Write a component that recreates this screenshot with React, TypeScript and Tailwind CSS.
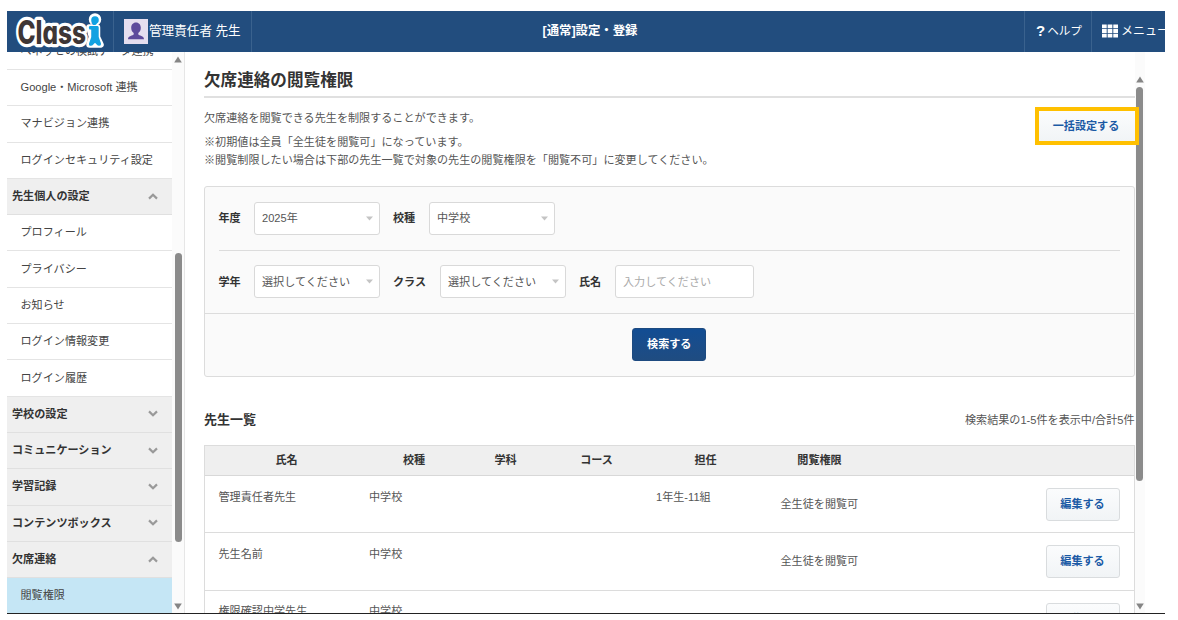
import type { ReactNode } from "react";

const navItems: { label: string; kind: "item" | "open" | "closed" | "active" }[] = [
  { label: "ベネッセの模試データ連携", kind: "item" },
  { label: "Google・Microsoft 連携", kind: "item" },
  { label: "マナビジョン連携", kind: "item" },
  { label: "ログインセキュリティ設定", kind: "item" },
  { label: "先生個人の設定", kind: "open" },
  { label: "プロフィール", kind: "item" },
  { label: "プライバシー", kind: "item" },
  { label: "お知らせ", kind: "item" },
  { label: "ログイン情報変更", kind: "item" },
  { label: "ログイン履歴", kind: "item" },
  { label: "学校の設定", kind: "closed" },
  { label: "コミュニケーション", kind: "closed" },
  { label: "学習記録", kind: "closed" },
  { label: "コンテンツボックス", kind: "closed" },
  { label: "欠席連絡", kind: "open" },
  { label: "閲覧権限", kind: "active" },
];

const teachers = [
  { name: "管理責任者先生", school: "中学校", homeroom: "1年生-11組", access: "全生徒を閲覧可" },
  { name: "先生名前", school: "中学校", homeroom: "", access: "全生徒を閲覧可" },
  { name: "権限確認中学先生", school: "中学校", homeroom: "", access: "全生徒を閲覧可" },
];

function Logo() {
  return (
    <svg
      width="100"
      height="41"
      viewBox="0 0 100 41"
      className="relative z-20 shrink-0 overflow-visible [font-feature-settings:'cv11']"
      aria-label="Classi"
    >
      <g fill="#fff" stroke="#fff" strokeWidth="6.5" strokeLinejoin="round" strokeLinecap="round">
        <path d="M16 14 28 11v21H16zM36 11v21M46 19h30v13H46z" strokeWidth="5" />
        <circle cx="88" cy="8.500" r="3" />
        <path d="M82.500 16.500H90V26l3.500 7.500H82.500L85 26z" />
      </g>
      <text
        x="10.500"
        y="33"
        fontFamily="Inter, sans-serif"
        fontWeight="800"
        fontSize="32"
        textLength="68.500"
        lengthAdjust="spacingAndGlyphs"
        fill="#3e3635"
        stroke="#fff"
        strokeWidth="6.500"
        strokeLinejoin="round"
        paintOrder="stroke"
      >
        Class
      </text>
      <g fill="#12a2e2">
        <text x="83" y="32" fontFamily="Inter, sans-serif" fontWeight="800" fontSize="29">
          i
        </text>
        <circle cx="88" cy="9" r="3.800" />
        <path d="M82.500 15h8q1.200 0 1.200 1.500V26l2.300 6.500q.4 2.300-1.800 2.300-1.500 0-2.500-1.300L88 31.800l-1.700 1.700q-1 1.300-2.500 1.300-2.200 0-1.800-2.300L84.300 26v-7.500h-1.800q-1.500-1.700 0-3.500z" />
      </g>
    </svg>
  );
}

function Chevron({ up }: { up: boolean }) {
  return (
    <svg width="10" height="7" viewBox="0 0 10 7" fill="none" stroke="#999" strokeWidth="2.2">
      <path d={up ? "M1 5.600 5 1.800 9 5.600" : "M1 1.400 5 5.200 9 1.400"} />
    </svg>
  );
}

function Arrow({ up }: { up: boolean }) {
  return (
    <svg width="8" height="7" viewBox="0 0 8 7" fill="#858585">
      <path d={up ? "M4 .5 7.800 6.500H.2z" : "M4 6.500 7.800 .5H.2z"} />
    </svg>
  );
}

function Nav() {
  return (
    <nav className="h-[561px] w-[165px] shrink-0 overflow-hidden">
      <div className="-mt-[18.3px]">
        {navItems.map((n) => {
          if (n.kind === "item" || n.kind === "active") {
            return (
              <div
                key={n.label}
                className={
                  "flex h-[36.3px] items-center border-b border-[#e4e4e4] pb-px pl-[13.5px] whitespace-nowrap text-[#444] " +
                  (n.kind === "active" ? "bg-[#c5e6f5]" : "bg-white")
                }
              >
                {n.label}
              </div>
            );
          }
          return (
            <div
              key={n.label}
              className="flex h-[36.3px] items-center justify-between border-b border-[#e0e0e0] bg-[#efefef] pr-[14px] pb-px pl-[5px] font-bold whitespace-nowrap text-[#333]"
            >
              {n.label}
              <Chevron up={n.kind === "open"} />
            </div>
          );
        })}
      </div>
    </nav>
  );
}

function Select({ value }: { value: string }) {
  return (
    <div className="flex h-[33px] w-[125.5px] items-center justify-between rounded-[3px] border border-[#d9d9d9] bg-white pr-[6px] pl-[7px] text-[#555]">
      <span>{value}</span>
      <svg width="7" height="5" viewBox="0 0 7 5" fill="#c4c4c4">
        <path d="M0 .5h7L3.500 4.500z" />
      </svg>
    </div>
  );
}

function Label({ className, children }: { className: string; children: ReactNode }) {
  return <span className={"shrink-0 font-bold text-[#333] " + className}>{children}</span>;
}

function EditButton() {
  return (
    <button className="h-[33px] w-[74px] rounded-[3px] border border-[#d9dcde] bg-linear-to-b from-[#fbfcfd] to-[#f1f4f6] pb-px font-bold text-[#1b5aa5]">
      編集する
    </button>
  );
}

const columns = "grid grid-cols-[150px_119px_65px_117px_101px_127px_1fr]";

export default function App() {
  return (
    <div className="h-[620px] w-[1178px] overflow-hidden bg-white pt-[11px] pl-[7px] font-['Liberation_Sans','Noto_Sans_CJK_JP',sans-serif] text-[11.1px] leading-[18px]">
      <div className="flex h-[603px] w-[1158px] flex-col overflow-hidden border-b border-[#222]">
        <header className="flex h-[41px] shrink-0 bg-[#224d7e] text-white">
          <div className="flex w-[107px] shrink-0 border-r border-[#3a628e]">
            <Logo />
          </div>
          <div className="flex w-[138px] shrink-0 items-center gap-[1px] border-r border-[#3a628e] pl-[10px] text-[12.6px] whitespace-nowrap">
            <svg width="24" height="25" viewBox="0 0 24 25" className="shrink-0">
              <path fill="#e5deef" d="M0 0h24v25H0z" />
              <path
                fill="#5e4a9c"
                d="M12 3.600c3 0 4.800 2.300 4.800 5.200 0 2.400-1 4.200-2.500 5.200v1.600c.6 1 5.700 1.200 5.700 4.600H4c0-3.400 5.100-3.600 5.700-4.600V14c-1.500-1-2.500-2.800-2.500-5.200 0-2.900 1.800-5.200 4.800-5.200z"
              />
            </svg>
            <span className="-mt-[2px]">管理責任者 先生</span>
          </div>
          <div className="flex flex-1 items-center justify-center pr-[96px] pb-[2px] text-[12.4px] font-bold">
            [通常]設定・登録
          </div>
          <div className="flex w-[67px] shrink-0 items-center gap-[2px] border-l border-[#3a628e] pb-[2px] pl-[11px] whitespace-nowrap">
            <b className="text-[15px]">?</b>
            <span className="text-[11.6px]">ヘルプ</span>
          </div>
          <div className="flex w-[74px] shrink-0 items-center gap-[3px] overflow-hidden border-l border-[#3a628e] pb-[2px] pl-[10px] text-[12px] whitespace-nowrap">
            <svg width="16" height="14" viewBox="0 0 17 14" fill="#fff" className="shrink-0">
              <path d="M0 0h5v4H0zM6 0h5v4H6zM12 0h5v4h-5zM0 5h5v4H0zM6 5h5v4H6zM12 5h5v4h-5zM0 10h5v4H0zM6 10h5v4H6zM12 10h5v4h-5z" />
            </svg>
            <span>メニュー</span>
          </div>
        </header>

        <div className="flex min-h-0 flex-1">
          <Nav />
          <div className="flex w-[13px] shrink-0 flex-col items-center border-r border-[#e6e6e6] bg-[#fbfbfb] pt-[4px] pb-[3px]">
            <Arrow up />
            <div className="mt-[190px] h-[289px] w-[7px] rounded-full bg-[#8b8b8b]" />
            <div className="mt-auto flex">
              <Arrow up={false} />
            </div>
          </div>

          <main className="ml-[19px] w-[930.5px] shrink-0 pt-[15px] text-[#555]">
            <h1 className="h-[31px] border-b-2 border-[#e0e0e0] text-[16.6px] leading-[27px] font-bold text-[#333]">
              欠席連絡の閲覧権限
            </h1>
            <div className="flex h-[88px] justify-between pt-[11px]">
              <div>
                <p>欠席連絡を閲覧できる先生を制限することができます。</p>
                <p className="mt-[6px]">※初期値は全員「全生徒を閲覧可」になっています。</p>
                <p>※閲覧制限したい場合は下部の先生一覧で対象の先生の閲覧権限を「閲覧不可」に変更してください。</p>
              </div>
              <div className="relative z-10 -mt-[2px] -mr-[4.5px] h-[38px] w-[104px] border-4 border-[#ffc000]">
                <button className="h-full w-full bg-linear-to-b from-[#fbfcfd] to-[#f1f4f6] pr-[2px] font-bold text-[#1b5aa5]">
                  一括設定する
                </button>
              </div>
            </div>

            <section className="h-[191px] rounded-[3px] border border-[#dcdcdc] bg-[#fafafa]">
              <div className="mx-[13.5px] flex h-[64px] items-center border-b border-[#dcdcdc] pb-px">
                <Label className="w-[35.5px]">年度</Label>
                <Select value="2025年" />
                <Label className="ml-[13.5px] w-[36px]">校種</Label>
                <Select value="中学校" />
              </div>
              <div className="flex h-[63px] items-center border-b border-[#dcdcdc] px-[13.5px] pb-px">
                <Label className="w-[35.5px]">学年</Label>
                <Select value="選択してください" />
                <Label className="ml-[13.5px] w-[47px]">クラス</Label>
                <Select value="選択してください" />
                <Label className="ml-[13.5px] w-[36px]">氏名</Label>
                <input
                  className="h-[33px] w-[139px] rounded-[3px] border border-[#d9d9d9] bg-white px-[7px] placeholder:text-[#aaa]"
                  placeholder="入力してください"
                />
              </div>
              <div className="flex h-[61px] items-center justify-center">
                <button className="h-[33px] w-[74px] rounded-[3px] border border-[#1d4a80] bg-linear-to-b from-[#124d93] to-[#1f4c81] pb-px font-bold text-white">
                  検索する
                </button>
              </div>
            </section>

            <div className="mt-[30px] flex h-[38px] justify-between pt-[3.5px]">
              <h2 className="text-[13px] font-bold text-[#333]">先生一覧</h2>
              <span>検索結果の1-5件を表示中/合計5件</span>
            </div>

            <section className="border border-[#dcdcdc]">
              <div className={columns + " h-[30px] items-center border-b border-[#d8d8d8] bg-[#efefef] pb-[2px] text-center font-bold text-[#333]"}>
                <span className="pl-[13px]">氏名</span>
                <span className="-ml-px">校種</span>
                <span className="-ml-[2px]">学科</span>
                <span className="-ml-[2px]">コース</span>
                <span className="-ml-[2px]">担任</span>
                <span className="-ml-[2px]">閲覧権限</span>
              </div>
              {teachers.map((t) => (
                <div key={t.name} className={columns + " h-[57.4px] border-b border-[#dcdcdc] pt-[12px]"}>
                  <span className="-mt-[0.5px] pl-[13.5px]">{t.name}</span>
                  <span className="-mt-[0.5px] pl-[14px]">{t.school}</span>
                  <span />
                  <span />
                  <span className="-mt-[0.5px]">{t.homeroom}</span>
                  <span className="pt-[7px] pl-[23.5px]">{t.access}</span>
                  <span className="flex justify-end pr-[14px]">
                    <EditButton />
                  </span>
                </div>
              ))}
            </section>
          </main>

          <div className="flex w-[10.5px] shrink-0 flex-col items-center bg-[#fbfbfb] pt-[24px] pb-[3px]">
            <Arrow up />
            <div className="mt-[4px] h-[394px] w-[7px] shrink-0 rounded-full bg-[#8b8b8b]" />
            <div className="mt-auto flex">
              <Arrow up={false} />
            </div>
          </div>
        </div>
      </div>
    </div>
  );
}
